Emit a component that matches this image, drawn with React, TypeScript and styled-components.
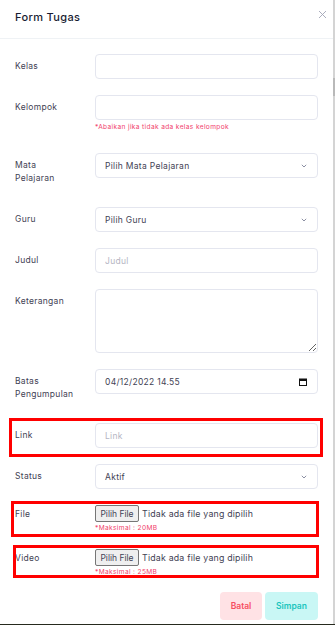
import { createGlobalStyle, styled } from "styled-components";

const GlobalStyle = createGlobalStyle`
  html, body {
    margin: 0;
    padding: 0;
    background: #262a1e;
  }
  * {
    box-sizing: border-box;
  }
`;

const App = () => {
  return (
    <Page>
      <GlobalStyle />
      <Modal>
        <Header>
          <Title>Form Tugas</Title>
          <CloseIcon width="9" height="9" viewBox="0 0 9 9">
            <path d="M1 1L8 8M8 1L1 8" stroke="#a1a5b7" strokeWidth="0.9" />
          </CloseIcon>
        </Header>
        <Body>
          <Row $mt={15}>
            <Label>Kelas</Label>
            <Field>
              <Input />
            </Field>
          </Row>
          <Row>
            <Label>Kelompok</Label>
            <Field>
              <Input />
              <Hint $big>*Abaikan jika tidak ada kelas kelompok</Hint>
            </Field>
          </Row>
          <Row>
            <Label>
              Mata
              <br />
              Pelajaran
            </Label>
            <Field>
              <SelectBox>
                <span>Pilih Mata Pelajaran</span>
                <Chevron />
              </SelectBox>
            </Field>
          </Row>
          <Row>
            <Label>Guru</Label>
            <Field>
              <SelectBox>
                <span>Pilih Guru</span>
                <Chevron />
              </SelectBox>
            </Field>
          </Row>
          <Row>
            <Label>Judul</Label>
            <Field>
              <Input placeholder="Judul" />
            </Field>
          </Row>
          <Row>
            <Label>Keterangan</Label>
            <Field>
              <TextArea />
            </Field>
          </Row>
          <Row>
            <Label>
              Batas
              <br />
              Pengumpulan
            </Label>
            <Field>
              <SelectBox>
                <span>04/12/2022 14.55</span>
                <svg width="8" height="8" viewBox="0 0 8 8">
                  <rect x="0.5" y="1" width="7" height="6.5" fill="none" stroke="#111" strokeWidth="1" />
                  <rect x="0.5" y="1" width="7" height="2" fill="#111" />
                </svg>
              </SelectBox>
            </Field>
          </Row>
          <Row>
            <Highlight $top={-5} $right={-5} $bottom={-9} $left={-6} />
            <Label>Link</Label>
            <Field>
              <Input placeholder="Link" />
            </Field>
          </Row>
          <Row>
            <Label>Status</Label>
            <Field>
              <SelectBox>
                <span>Aktif</span>
                <Chevron />
              </SelectBox>
            </Field>
          </Row>
          <Row>
            <Highlight $top={-4} $right={-1} $bottom={-4} $left={-4} />
            <FileLabel>File</FileLabel>
            <Field>
              <FilePicker>
                <FileButton type="button">Pilih File</FileButton>
                <span>Tidak ada file yang dipilih</span>
              </FilePicker>
              <Hint>*Maksimal : 20MB</Hint>
            </Field>
          </Row>
          <Row>
            <Highlight $top={-4} $right={-1} $bottom={-1} $left={-2} />
            <FileLabel>Video</FileLabel>
            <Field>
              <FilePicker>
                <FileButton type="button">Pilih File</FileButton>
                <span>Tidak ada file yang dipilih</span>
              </FilePicker>
              <Hint>*Maksimal : 25MB</Hint>
            </Field>
          </Row>
          <Footer>
            <Button $w={42} $bg="#ffe2e5" $color="#f64e60">Batal</Button>
            <Button $w={53} $bg="#c9f7f5" $color="#1bc5bd">Simpan</Button>
          </Footer>
        </Body>
      </Modal>
      <Backdrop />
    </Page>
  );
};

const Chevron = () => (
  <svg width="6" height="4" viewBox="0 0 6 4">
    <path d="M0.8 0.8L3 3L5.2 0.8" fill="none" stroke="#7e8299" strokeWidth="0.9" />
  </svg>
);

export default App;

// Style
const Page = styled.div`
  display: flex;
  width: 335px;
  height: 624px;
  font-family: Inter, "Noto Sans", sans-serif;
  color: #3f4254;
`;
const Modal = styled.div`
  width: 333px;
  height: 624px;
  background: #ffffff;
  overflow: hidden;
`;
const Backdrop = styled.div`
  width: 2px;
  background: linear-gradient(#d4d4d4 0 78px, #b9b9b9 78px 96px, #d4d4d4 96px);
`;
const Header = styled.div`
  display: flex;
  align-items: center;
  justify-content: space-between;
  height: 39px;
  padding: 0 6px 0 15px;
  border-bottom: 1px solid #eff2f5;
`;
const Title = styled.h3`
  margin: 0 0 5px;
  font-size: 11px;
  font-weight: 500;
  letter-spacing: 0.35px;
  color: #181c32;
`;
const CloseIcon = styled.svg`
  margin-bottom: 9px;
`;
const Body = styled.div`
  padding: 0 15px;
`;
const Row = styled.div<{ $mt?: number }>`
  position: relative;
  display: grid;
  grid-template-columns: 80px 1fr;
  align-items: start;
  margin-top: ${(p) => (p.$mt ?? 16)}px;
`;
const Label = styled.label`
  padding: 6px 0;
  font-size: 8.5px;
  line-height: 13px;
  letter-spacing: 0.3px;
  color: #3f4254;
`;
const FileLabel = styled(Label)`
  padding: 3px 0;
  line-height: 12px;
`;
const Field = styled.div`
  display: flex;
  flex-direction: column;
`;
const fieldBox = `
  width: 100%;
  height: 25px;
  border: 1px solid #e4e6ef;
  border-radius: 4px;
  background: #ffffff;
  padding: 0 9px;
  font-family: Inter, "Noto Sans", sans-serif;
  font-size: 8.5px;
  letter-spacing: 0.3px;
  color: #3f4254;
  outline: none;
`;
const Input = styled.input`
  ${fieldBox}
  &::placeholder {
    color: #b5b5c3;
  }
`;
const TextArea = styled.textarea`
  ${fieldBox}
  height: 64px;
  resize: vertical;
  display: block;
`;
const SelectBox = styled.div`
  ${fieldBox}
  display: flex;
  align-items: center;
  justify-content: space-between;
  padding: 0 10px 0 9px;
`;
const Hint = styled.div<{ $big?: boolean }>`
  margin: ${(p) => (p.$big ? "3px 0 5px" : "2px 0 0")};
  font-size: 6.6px;
  line-height: 9px;
  letter-spacing: 0.35px;
  color: #f1416c;
`;
const FilePicker = styled.div`
  display: flex;
  align-items: center;
  gap: 3px;
  font-size: 8.8px;
  letter-spacing: 0.2px;
  color: #3f4254;
`;
const FileButton = styled.button`
  height: 17px;
  width: 44px;
  padding: 0;
  border: 1px solid #767676;
  border-radius: 2px;
  background: #efefef;
  font-family: Inter, "Noto Sans", sans-serif;
  font-size: 8.5px;
  color: #3f4254;
`;
const Highlight = styled.div<{ $top: number; $right: number; $bottom: number; $left: number }>`
  position: absolute;
  top: ${(p) => p.$top}px;
  right: ${(p) => p.$right}px;
  bottom: ${(p) => p.$bottom}px;
  left: ${(p) => p.$left}px;
  border: 3px solid #ff0000;
  pointer-events: none;
`;
const Footer = styled.div`
  display: flex;
  justify-content: flex-end;
  gap: 3px;
  margin-top: 15px;
`;
const Button = styled.button<{ $w: number; $bg: string; $color: string }>`
  width: ${(p) => p.$w}px;
  height: 28px;
  padding: 0;
  border: none;
  border-radius: 4px;
  background: ${(p) => p.$bg};
  color: ${(p) => p.$color};
  font-family: Inter, "Noto Sans", sans-serif;
  font-size: 8.5px;
  font-weight: 600;
`;
